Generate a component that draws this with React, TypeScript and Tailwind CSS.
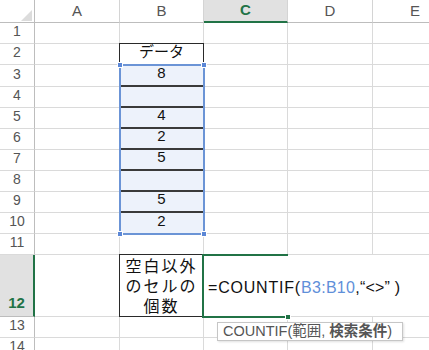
import React from "react";

const font = "font-['Liberation_Sans','Noto_Sans_CJK_JP',sans-serif]";
const grid = "border-r border-b border-[#dadada]";

type Row = { n: number; h: string; b?: string };

const rows: Row[] = [
  { n: 1, h: "h-[21px]" },
  { n: 2, h: "h-[21px]", b: "データ" },
  { n: 3, h: "h-[22px]", b: "8" },
  { n: 4, h: "h-[21px]", b: "" },
  { n: 5, h: "h-[21px]", b: "4" },
  { n: 6, h: "h-[21px]", b: "2" },
  { n: 7, h: "h-[21px]", b: "5" },
  { n: 8, h: "h-[21px]", b: "" },
  { n: 9, h: "h-[21px]", b: "5" },
  { n: 10, h: "h-[21px]", b: "2" },
  { n: 11, h: "h-[21px]" },
  { n: 12, h: "h-[62px]" },
  { n: 13, h: "h-[21px]" },
  { n: 14, h: "h-[21px]" },
];

const ColHead = ({ label, w, active }: { label: string; w: string; active?: boolean }) => (
  <div
    className={`${w} shrink-0 flex items-center justify-center text-[15px] border-r border-[#d4d4d4] ${
      active
        ? "bg-[#e1e1e1] border-b-2 border-b-[#217346] text-[#217346] font-bold"
        : "border-b border-b-[#bdbdbd] text-[#555]"
    }`}
  >
    {label}
  </div>
);

const BCell = ({ r }: { r: Row }) => {
  if (r.n === 2) {
    return (
      <div className={`w-[84px] shrink-0 relative ${grid} flex items-end justify-center pb-[1px] text-[15px] text-[#111]`}>
        <div className="absolute -left-px -top-px -right-px -bottom-px border border-[#2a2a2a]" />
        <span className="relative">{r.b}</span>
      </div>
    );
  }
  if (r.n >= 3 && r.n <= 10) {
    const line = r.n < 10 ? "border-b-2 border-b-[#3a3a3a]" : "border-b border-b-[#dadada]";
    return (
      <div
        className={`w-[84px] shrink-0 bg-[#edf2fb] border-r border-r-[#dadada] ${line} flex items-end justify-center pb-[1px] text-[15px] text-[#111]`}
      >
        {r.b}
      </div>
    );
  }
  if (r.n === 12) {
    return (
      <div className={`w-[84px] shrink-0 relative ${grid}`}>
        <div className="absolute -left-px -top-px -right-px -bottom-px border border-[#2a2a2a] flex flex-col items-center pt-[2px] text-[16px] leading-[20px] tracking-[2px] text-[#111]">
          <span>空白以外</span>
          <span>のセルの</span>
          <span>個数</span>
        </div>
      </div>
    );
  }
  return <div className={`w-[84px] shrink-0 ${grid}`} />;
};

const SheetRow = ({ r }: { r: Row }) => {
  const is12 = r.n === 12;
  return (
    <div className={`flex ${r.h}`}>
      <div
        className={`w-[35px] shrink-0 flex justify-center text-[14px] ${
          is12
            ? "bg-[#e1e1e1] border-r-2 border-r-[#217346] border-b border-b-[#bdbdbd] text-[#217346] font-bold items-end pb-[2px] text-[15px]"
            : "border-r border-r-[#bdbdbd] border-b border-b-[#dadada] text-[#555] items-end pb-[1px]"
        }`}
      >
        {r.n}
      </div>
      <div className={`w-[85px] shrink-0 ${grid}`} />
      <BCell r={r} />
      {is12 ? (
        <>
          <div className="w-[84px] shrink-0 border-b border-[#dadada] flex items-center pl-[4px] pt-[4px] whitespace-nowrap text-[16px] text-[#111]">
            <span className="tracking-[0.8px]">=COUNTIF(</span>
            <span className="text-[#5f8fd9] tracking-[0.3px]">B3:B10</span>
            <span className="tracking-[0.2px]">,“&lt;&gt;” )</span>
          </div>
          <div className="w-[85px] shrink-0 border-b border-[#dadada]" />
          <div className="w-[85px] shrink-0 border-b border-[#dadada]" />
        </>
      ) : (
        <>
          <div className={`w-[84px] shrink-0 ${grid}`} />
          <div className={`w-[85px] shrink-0 ${grid}`} />
          <div className={`w-[85px] shrink-0 ${grid}`} />
        </>
      )}
    </div>
  );
};

const Handle = ({ pos, color }: { pos: string; color: string }) => (
  <div className={`absolute w-[6px] h-[6px] ${pos} ${color} border border-white`} />
);

export default function App() {
  return (
    <div className={`relative w-[429px] h-[350px] overflow-hidden bg-white ${font}`}>
      <div className="flex h-[23px]">
        <div className="w-[35px] shrink-0 border-r border-b border-[#bdbdbd] relative">
          <svg className="absolute left-0 top-0" width="35" height="23" viewBox="0 0 35 23">
            <polygon points="21,21 32,21 32,10" fill="#dcdcdc" />
          </svg>
        </div>
        <ColHead label="A" w="w-[85px]" />
        <ColHead label="B" w="w-[84px]" />
        <ColHead label="C" w="w-[84px]" active />
        <ColHead label="D" w="w-[85px]" />
        <ColHead label="E" w="w-[85px]" />
      </div>
      {rows.map((r) => (
        <SheetRow key={r.n} r={r} />
      ))}

      {/* selection B3:B10 */}
      <div className="absolute left-[119px] top-[64px] w-[86px] h-[171px] border-2 border-[#6b94d6]" />
      <Handle pos="left-[117px] top-[62px]" color="bg-[#5b87d6]" />
      <Handle pos="left-[201px] top-[62px]" color="bg-[#5b87d6]" />
      <Handle pos="left-[117px] top-[231px]" color="bg-[#5b87d6]" />
      <Handle pos="left-[201px] top-[231px]" color="bg-[#5b87d6]" />

      {/* active cell C12 */}
      <div className="absolute left-[202px] top-[254px] w-[86px] h-[64px] border-l-2 border-t-2 border-b-2 border-[#217346]" />
      <Handle pos="left-[285px] top-[314px]" color="bg-[#217346]" />

      {/* function tooltip */}
      <div className="absolute left-[217px] top-[322px] w-[186px] h-[19px] bg-white border border-[#c6c6c6] shadow-[1px_1px_2px_rgba(0,0,0,0.12)] pl-[5px] leading-[17px] whitespace-nowrap text-[14.5px] text-[#555]">
        <span>COUNTIF(範囲, </span>
        <span className="font-semibold text-[#555]">検索条件</span>
        <span>)</span>
      </div>
    </div>
  );
}
